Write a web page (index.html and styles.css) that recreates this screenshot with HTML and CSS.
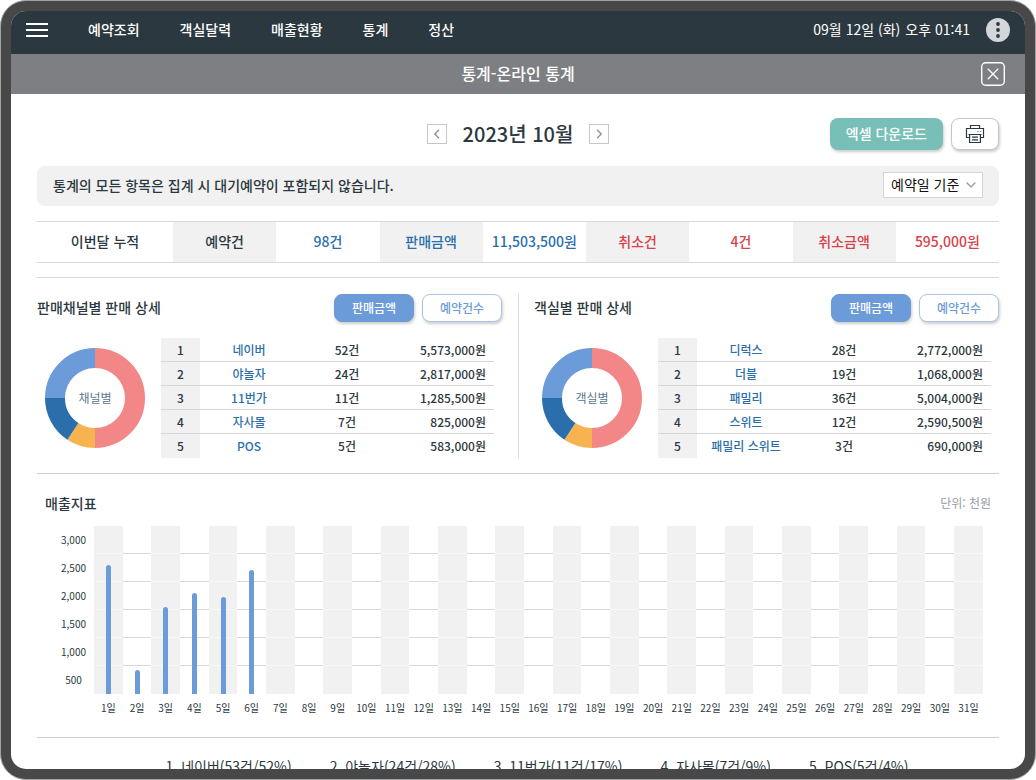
FILE: index.html
```html
<!DOCTYPE html>
<html lang="ko">
<head>
    <meta charset="UTF-8">
    <meta name="viewport" content="width=device-width, initial-scale=1.0">
    <title>통계-온라인 통계</title>
    <link rel="stylesheet" href="styles.css">
</head>
<body>

<div class="device">
    <div class="screen">

        <header class="topbar">
            <button class="menu-btn" type="button" aria-label="메뉴">
                <span></span><span></span><span></span>
            </button>
            <nav class="nav">
                <a href="#">예약조회</a>
                <a href="#">객실달력</a>
                <a href="#">매출현황</a>
                <a href="#">통계</a>
                <a href="#">정산</a>
            </nav>
            <div class="clock"><span>09월 12일 (화)</span><span>오후 01:41</span></div>
            <button class="more-btn" type="button" aria-label="더보기">
                <svg width="24" height="24" viewBox="0 0 24 24">
                    <circle cx="12" cy="12" r="12" fill="#d3d7da"/>
                    <circle cx="12" cy="6" r="1.9" fill="#2c3840"/>
                    <circle cx="12" cy="12" r="1.9" fill="#2c3840"/>
                    <circle cx="12" cy="18" r="1.9" fill="#2c3840"/>
                </svg>
            </button>
        </header>

        <div class="titlebar">
            <h1>통계-온라인 통계</h1>
            <button class="close-btn" type="button" aria-label="닫기">
                <svg width="24" height="24" viewBox="0 0 24 24" fill="none" stroke="#fff">
                    <rect x="0.7" y="0.7" width="22.6" height="22.6" rx="4" stroke-width="1.4"/>
                    <path d="M6.8 6.8l10.4 10.4M17.2 6.8L6.8 17.2" stroke-width="1.3"/>
                </svg>
            </button>
        </div>

        <main class="content">

            <div class="toolbar">
                <div class="month">
                    <button class="arrow-btn" type="button" aria-label="이전 달">
                        <svg width="18" height="18" viewBox="0 0 18 18" fill="none" stroke="#8d9399" stroke-width="1.4"><path d="M11 4.8L6.8 9l4.2 4.2"/></svg>
                    </button>
                    <h2>2023년 10월</h2>
                    <button class="arrow-btn" type="button" aria-label="다음 달">
                        <svg width="18" height="18" viewBox="0 0 18 18" fill="none" stroke="#8d9399" stroke-width="1.4"><path d="M7 4.8L11.2 9 7 13.2"/></svg>
                    </button>
                </div>
                <div class="actions">
                    <button class="excel-btn" type="button">엑셀 다운로드</button>
                    <button class="print-btn" type="button" aria-label="인쇄">
                        <svg width="20" height="20" viewBox="0 0 20 20" fill="none" stroke="#2c3840" stroke-width="1.2">
                            <path d="M5.5 4.5v-3h9v3"/>
                            <path d="M4.6 13.5H1.5v-9h17v9h-3.1"/>
                            <path d="M3.5 10.5h13"/>
                            <path d="M4.6 10.5v8h10.8v-8"/>
                            <path d="M7 13.2h6M7 15.8h6"/>
                            <path d="M12.2 7.5h1.4M14.8 7.5h1.4" stroke="#7d858b"/>
                        </svg>
                    </button>
                </div>
            </div>

            <div class="notice">
                <p>통계의 모든 항목은 집계 시 대기예약이 포함되지 않습니다.</p>
                <div class="select">
                    <select aria-label="조회 기준">
                        <option>예약일 기준</option>
                        <option>투숙일 기준</option>
                    </select>
                    <svg width="10" height="6" viewBox="0 0 10 6" fill="none" stroke="#9aa0a8" stroke-width="1.4"><path d="M0.6 0.6L5 5l4.4-4.4"/></svg>
                </div>
            </div>

            <table class="summary">
                <tr>
                    <th class="total">이번달 누적</th>
                    <th class="key">예약건</th>
                    <td class="blue">98건</td>
                    <th class="key blue">판매금액</th>
                    <td class="blue">11,503,500원</td>
                    <th class="key red">취소건</th>
                    <td class="red">4건</td>
                    <th class="key red">취소금액</th>
                    <td class="red">595,000원</td>
                </tr>
            </table>

            <div class="panels">
                <section class="panel">
                    <div class="panel-head">
                        <h3>판매채널별 판매 상세</h3>
                        <button class="tab active" type="button">판매금액</button>
                        <button class="tab" type="button">예약건수</button>
                    </div>
                    <div class="panel-body">
                        <div class="donut">
                            <svg width="100" height="100" viewBox="0 0 100 100" fill="none" stroke-width="20">
                                <path d="M50 10a40 40 0 0 1 0 80" stroke="#f38686"/>
                                <path d="M50 90a40 40 0 0 1-22.08-6.64" stroke="#f7b350"/>
                                <path d="M27.92 83.36A40 40 0 0 1 10 50" stroke="#2a6fab"/>
                                <path d="M10 50a40 40 0 0 1 40-40" stroke="#6b9bd9"/>
                            </svg>
                            <span>채널별</span>
                        </div>
                        <table class="rank">
                            <tr><th>1</th><td><a href="#">네이버</a></td><td>52건</td><td class="won">5,573,000원</td></tr>
                            <tr><th>2</th><td><a href="#">야놀자</a></td><td>24건</td><td class="won">2,817,000원</td></tr>
                            <tr><th>3</th><td><a href="#">11번가</a></td><td>11건</td><td class="won">1,285,500원</td></tr>
                            <tr><th>4</th><td><a href="#">자사몰</a></td><td>7건</td><td class="won">825,000원</td></tr>
                            <tr><th>5</th><td><a href="#">POS</a></td><td>5건</td><td class="won">583,000원</td></tr>
                        </table>
                    </div>
                </section>

                <section class="panel">
                    <div class="panel-head">
                        <h3>객실별 판매 상세</h3>
                        <button class="tab active" type="button">판매금액</button>
                        <button class="tab" type="button">예약건수</button>
                    </div>
                    <div class="panel-body">
                        <div class="donut">
                            <svg width="100" height="100" viewBox="0 0 100 100" fill="none" stroke-width="20">
                                <path d="M50 10a40 40 0 0 1 0 80" stroke="#f38686"/>
                                <path d="M50 90a40 40 0 0 1-22.08-6.64" stroke="#f7b350"/>
                                <path d="M27.92 83.36A40 40 0 0 1 10 50" stroke="#2a6fab"/>
                                <path d="M10 50a40 40 0 0 1 40-40" stroke="#6b9bd9"/>
                            </svg>
                            <span>객실별</span>
                        </div>
                        <table class="rank">
                            <tr><th>1</th><td><a href="#">디럭스</a></td><td>28건</td><td class="won">2,772,000원</td></tr>
                            <tr><th>2</th><td><a href="#">더블</a></td><td>19건</td><td class="won">1,068,000원</td></tr>
                            <tr><th>3</th><td><a href="#">패밀리</a></td><td>36건</td><td class="won">5,004,000원</td></tr>
                            <tr><th>4</th><td><a href="#">스위트</a></td><td>12건</td><td class="won">2,590,500원</td></tr>
                            <tr><th>5</th><td><a href="#">패밀리 스위트</a></td><td>3건</td><td class="won">690,000원</td></tr>
                        </table>
                    </div>
                </section>
            </div>

            <section class="sales">
                <div class="sales-head">
                    <h3>매출지표</h3>
                    <span>단위: 천원</span>
                </div>
                <div class="chart">
                    <ul class="y-axis">
                        <li>3,000</li>
                        <li>2,500</li>
                        <li>2,000</li>
                        <li>1,500</li>
                        <li>1,000</li>
                        <li>500</li>
                    </ul>
                    <ol class="days">
                        <li><div class="col"><i style="height:77%"></i></div>1일</li>
                        <li><div class="col"><i style="height:14%"></i></div>2일</li>
                        <li><div class="col"><i style="height:52%"></i></div>3일</li>
                        <li><div class="col"><i style="height:60%"></i></div>4일</li>
                        <li><div class="col"><i style="height:58%"></i></div>5일</li>
                        <li><div class="col"><i style="height:74%"></i></div>6일</li>
                        <li><div class="col"></div>7일</li>
                        <li><div class="col"></div>8일</li>
                        <li><div class="col"></div>9일</li>
                        <li><div class="col"></div>10일</li>
                        <li><div class="col"></div>11일</li>
                        <li><div class="col"></div>12일</li>
                        <li><div class="col"></div>13일</li>
                        <li><div class="col"></div>14일</li>
                        <li><div class="col"></div>15일</li>
                        <li><div class="col"></div>16일</li>
                        <li><div class="col"></div>17일</li>
                        <li><div class="col"></div>18일</li>
                        <li><div class="col"></div>19일</li>
                        <li><div class="col"></div>20일</li>
                        <li><div class="col"></div>21일</li>
                        <li><div class="col"></div>22일</li>
                        <li><div class="col"></div>23일</li>
                        <li><div class="col"></div>24일</li>
                        <li><div class="col"></div>25일</li>
                        <li><div class="col"></div>26일</li>
                        <li><div class="col"></div>27일</li>
                        <li><div class="col"></div>28일</li>
                        <li><div class="col"></div>29일</li>
                        <li><div class="col"></div>30일</li>
                        <li><div class="col"></div>31일</li>
                    </ol>
                </div>
            </section>

            <ul class="share">
                <li>1. 네이버(53건/52%)</li>
                <li>2. 야놀자(24건/28%)</li>
                <li>3. 11번가(11건/17%)</li>
                <li>4. 자사몰(7건/9%)</li>
                <li>5. POS(5건/4%)</li>
            </ul>

        </main>
    </div>
</div>

</body>
</html>
```
FILE: styles.css
```css
* {
    box-sizing: border-box;
}

body {
    margin: 0;
    background: #fff;
    color: #2c3840;
    font-family: "Noto Sans CJK KR", "Noto Sans", sans-serif;
    font-size: 14px;
    line-height: 20px;
}

h1, h2, h3, p, ul, ol {
    margin: 0;
    padding: 0;
    font-weight: 500;
}

ul, ol {
    list-style: none;
}

a {
    color: inherit;
    text-decoration: none;
}

button {
    padding: 0;
    border: 0;
    background: none;
    color: inherit;
    font: inherit;
    cursor: pointer;
}

svg {
    display: block;
}

/* tablet frame */
.device {
    height: 100vh;
    padding: 10px;
    border: 1px solid #a0a3a3;
    border-radius: 26px;
    background: #484848;
}

.screen {
    height: 100%;
    overflow: hidden;
    border-radius: 15px;
    background: #fff;
}

/* top navigation */
.topbar {
    display: flex;
    align-items: center;
    height: 43px;
    padding: 0 15px 5px;
    background: #2c3840;
    color: #fff;
}

.menu-btn {
    display: flex;
    flex-direction: column;
    gap: 4px;
    width: 22px;
    margin-right: 40px;
}

.menu-btn span {
    height: 2px;
    background: #fff;
}

.nav {
    display: flex;
    flex: 1;
    gap: 40px;
    padding-bottom: 2px;
    font-weight: 500;
}

.clock {
    display: flex;
    gap: 5px;
    margin-right: 16px;
    padding-bottom: 2px;
}

.titlebar {
    display: grid;
    grid-template-columns: 1fr auto 1fr;
    align-items: center;
    height: 40px;
    padding: 0 20px;
    background: #7e7f83;
    color: #fff;
}

.titlebar h1 {
    grid-column: 2;
    padding-bottom: 2px;
    font-size: 16px;
}

.close-btn {
    justify-self: end;
}

.content {
    padding: 24px 26px;
}

/* month and buttons */
.toolbar {
    display: grid;
    grid-template-columns: 1fr auto 1fr;
    align-items: center;
}

.month {
    display: flex;
    grid-column: 2;
    align-items: center;
    gap: 16px;
}

.month h2 {
    font-size: 20px;
}

.arrow-btn {
    width: 20px;
    height: 20px;
    border: 1px solid #c3c7cb;
}

.actions {
    display: flex;
    justify-content: flex-end;
    gap: 8px;
}

.excel-btn,
.print-btn {
    height: 32px;
    border-radius: 8px;
    box-shadow: 1px 2px 3px rgba(0, 0, 0, 0.2);
}

.excel-btn {
    padding: 0 16px 2px;
    background: #78bfb7;
    color: #fff;
    font-weight: 500;
}

.print-btn {
    display: grid;
    place-items: center;
    width: 48px;
    border: 1px solid #c3c7cb;
    background: #fff;
}

.notice {
    display: flex;
    align-items: center;
    justify-content: space-between;
    height: 40px;
    margin-top: 16px;
    padding: 0 16px 2px;
    border-radius: 8px;
    background: #f1f1f1;
}

.select {
    position: relative;
}

.select select {
    display: block;
    width: 100px;
    height: 26px;
    padding: 0 7px 2px;
    border: 1px solid #d3d5d7;
    border-radius: 0;
    background: #fff;
    color: #111;
    font: inherit;
    appearance: none;
}

.select svg {
    position: absolute;
    top: 10px;
    right: 7px;
    pointer-events: none;
}

/* monthly totals */
.summary {
    width: 100%;
    margin-top: 15px;
    border-top: 1px solid #d9d9d9;
    border-bottom: 1px solid #d9d9d9;
    border-spacing: 0;
    table-layout: fixed;
    font-weight: 500;
    text-align: center;
}

.summary th,
.summary td {
    height: 40px;
    padding: 0 0 2px;
    font-weight: 500;
}

.summary .total {
    width: 136px;
}

.summary .key {
    background: #f1f1f1;
}

.blue {
    color: #2a6fab;
}

.red {
    color: #d8434a;
}

/* channel and room panels */
.panels {
    display: grid;
    grid-template-columns: 1fr 1fr;
    margin-top: 14px;
    padding: 16px 0 15px;
    border-top: 1px solid #d9d9d9;
    border-bottom: 1px solid #cdcdcd;
}

.panel:first-child {
    padding-right: 16px;
}

.panel:last-child {
    padding-left: 15px;
    border-left: 1px solid #d9d9d9;
}

.panel-head {
    display: flex;
    align-items: center;
    gap: 8px;
}

.panel-head h3 {
    flex: 1;
    padding-bottom: 2px;
    font-size: 14px;
}

.tab {
    width: 80px;
    height: 28px;
    border: 1px solid #a9c5ea;
    border-radius: 8px;
    background: #fff;
    box-shadow: 1px 2px 3px rgba(0, 0, 0, 0.2);
    color: #6b9bd9;
    font-size: 12px;
    font-weight: 500;
}

.tab.active {
    border-color: #6b9bd9;
    background: #6b9bd9;
    color: #fff;
}

.panel-body {
    display: flex;
    align-items: center;
    gap: 16px;
    margin-top: 16px;
    padding: 0 8px;
}

.donut {
    display: grid;
    flex: none;
    place-items: center;
}

.donut svg,
.donut span {
    grid-area: 1 / 1;
}

.donut span {
    color: #5a788f;
    font-size: 12px;
}

.rank {
    width: 100%;
    border-spacing: 0;
    table-layout: fixed;
    font-size: 12px;
    font-weight: 500;
    text-align: center;
}

.rank th,
.rank td {
    height: 24px;
    padding: 0;
    border-bottom: 1px solid #d5d5d5;
    font-weight: 500;
}

.rank th {
    width: 39px;
    background: #f1f1f1;
}

.rank tr:last-child > * {
    border-bottom: 0;
}

.rank a {
    color: #2a6fab;
}

.rank .won {
    padding-right: 8px;
    text-align: right;
}

/* daily sales chart */
.sales {
    padding: 19px 8px 17px;
    border-bottom: 1px solid #cdcdcd;
}

.sales-head {
    display: flex;
    align-items: center;
    justify-content: space-between;
}

.sales-head h3 {
    font-size: 14px;
}

.sales-head span {
    color: #969ca2;
    font-size: 12px;
}

.chart {
    display: flex;
    margin-top: 13px;
    padding-right: 8px;
    font-size: 10px;
    text-align: center;
}

.y-axis {
    width: 49px;
    font-weight: 400;
}

.y-axis li {
    height: 28px;
    padding-left: 8px;
    line-height: 28px;
}

.days {
    display: flex;
    flex: 1;
    font-weight: 400;
}

.days li {
    flex: 1 1 0;
    min-width: 0;
    line-height: 24px;
    white-space: nowrap;
}

.col {
    display: flex;
    align-items: flex-end;
    justify-content: center;
    height: 168px;
    margin-bottom: 2px;
    background: repeating-linear-gradient(transparent 0 27px, #d9d9d9 27px 28px) 0 0 / 100% 140px no-repeat;
}

.days li:nth-child(odd) .col {
    background-color: #f1f1f1;
    background-image: repeating-linear-gradient(transparent 0 27px, #f8f8f8 27px 28px);
}

.col i {
    width: 5px;
    border-radius: 3px 3px 0 0;
    background: #6b9bd9;
}

.share {
    display: flex;
    justify-content: center;
    padding-top: 18px;
}

.share li {
    padding-left: 38px;
    font-weight: 400;
}
```
